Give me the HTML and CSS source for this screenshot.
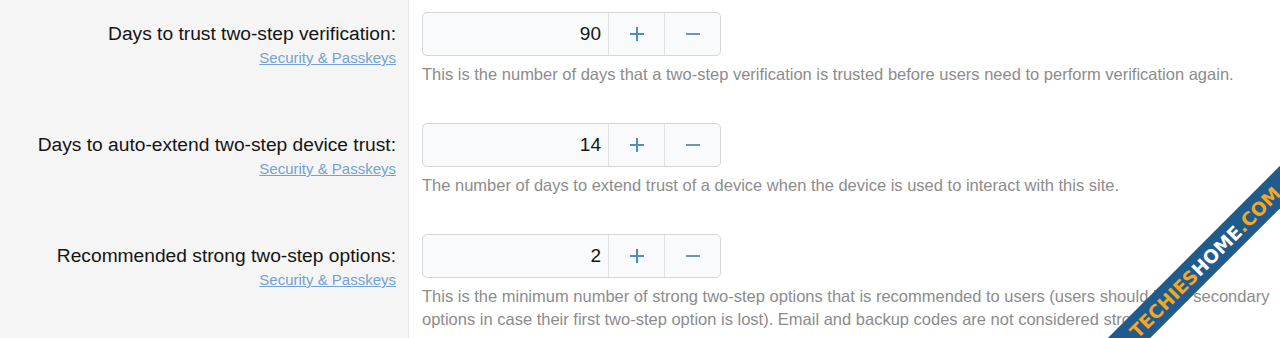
FILE: index.html
```html
<!DOCTYPE html>
<html>
<head>
<meta charset="utf-8">
<link rel="stylesheet" href="styles.css">
</head>
<body>
<div class="page">
  <dl class="form">
    <div class="row">
      <dt class="label-cell">
        <div class="label">Days to trust two-step verification:</div>
        <a class="hint-link" href="#">Security &amp; Passkeys</a>
      </dt>
      <dd class="input-cell">
        <div class="spinner">
          <div class="spin-value">90</div>
          <div class="spin-btn"><svg width="16" height="16" viewBox="0 0 16 16"><path d="M8 1v14M1 8h14" class="plus"/></svg></div>
          <div class="spin-btn"><svg width="16" height="16" viewBox="0 0 16 16"><path d="M1 8h14" class="minus"/></svg></div>
        </div>
        <p class="explain">This is the number of days that a two-step verification is trusted before users need to perform verification again.</p>
      </dd>
    </div>
    <div class="row">
      <dt class="label-cell">
        <div class="label">Days to auto-extend two-step device trust:</div>
        <a class="hint-link" href="#">Security &amp; Passkeys</a>
      </dt>
      <dd class="input-cell">
        <div class="spinner">
          <div class="spin-value">14</div>
          <div class="spin-btn"><svg width="16" height="16" viewBox="0 0 16 16"><path d="M8 1v14M1 8h14" class="plus"/></svg></div>
          <div class="spin-btn"><svg width="16" height="16" viewBox="0 0 16 16"><path d="M1 8h14" class="minus"/></svg></div>
        </div>
        <p class="explain">The number of days to extend trust of a device when the device is used to interact with this site.</p>
      </dd>
    </div>
    <div class="row">
      <dt class="label-cell">
        <div class="label">Recommended strong two-step options:</div>
        <a class="hint-link" href="#">Security &amp; Passkeys</a>
      </dt>
      <dd class="input-cell">
        <div class="spinner">
          <div class="spin-value">2</div>
          <div class="spin-btn"><svg width="16" height="16" viewBox="0 0 16 16"><path d="M8 1v14M1 8h14" class="plus"/></svg></div>
          <div class="spin-btn"><svg width="16" height="16" viewBox="0 0 16 16"><path d="M1 8h14" class="minus"/></svg></div>
        </div>
        <p class="explain">This is the minimum number of strong two-step options that is recommended to users (users should have secondary options in case their first two-step option is lost). Email and backup codes are not considered strong.</p>
      </dd>
    </div>
  </dl>
  <div class="ribbon"><span class="or">TECHIES</span><span class="wh">HOME</span><span class="or">.COM</span></div>
</div>
</body>
</html>
```
FILE: styles.css
```css
html, body {
  margin: 0;
  padding: 0;
  background: #ffffff;
  overflow: hidden;
}
.page {
  position: relative;
  width: 1280px;
  height: 338px;
  overflow: hidden;
  font-family: "Liberation Sans", Arial, Helvetica, sans-serif;
}
.form {
  margin: 0;
  display: flex;
  flex-direction: column;
}
.row {
  display: grid;
  grid-template-columns: 409px 1fr;
}
.label-cell {
  background: #f5f5f5;
  border-right: 1px solid #e6e6e6;
  padding: 22px 12px 0 0;
  text-align: right;
}
.label {
  font-size: 19.2px;
  line-height: 24px;
  color: #141414;
}
.hint-link {
  display: inline-block;
  margin-top: 2px;
  font-size: 15px;
  line-height: 20px;
  color: #73a2d3;
  text-decoration: underline;
}
.input-cell {
  margin: 0;
  padding: 12px 10px 25px 13px;
}
.spinner {
  display: flex;
  width: 297px;
  height: 42px;
  border: 1px solid #d6d6d6;
  border-radius: 5px;
  background: #f8fafb;
  overflow: hidden;
}
.spin-value {
  flex: 1;
  display: flex;
  align-items: center;
  justify-content: flex-end;
  padding-right: 7px;
  font-size: 19px;
  color: #141414;
}
.spin-btn {
  width: 55px;
  border-left: 1px solid #e2e2e2;
  display: flex;
  align-items: center;
  justify-content: center;
}
.plus {
  stroke: #4f8dc6;
  stroke-width: 2;
  fill: none;
}
.minus {
  stroke: #6d95bd;
  stroke-width: 2;
  fill: none;
}
.explain {
  margin: 7px 0 0 0;
  font-size: 16.5px;
  line-height: 23px;
  color: #8c8c8c;
}
.ribbon {
  position: absolute;
  left: 1005px;
  top: 247px;
  width: 400px;
  height: 30px;
  background: #1f5c8d;
  transform: rotate(-45deg);
  display: flex;
  align-items: center;
  justify-content: center;
  font-family: "DejaVu Sans", "Liberation Sans", sans-serif;
  font-weight: bold;
  font-size: 18.5px;
}
.or { color: #f6a623; }
.wh { color: #ffffff; }
```
